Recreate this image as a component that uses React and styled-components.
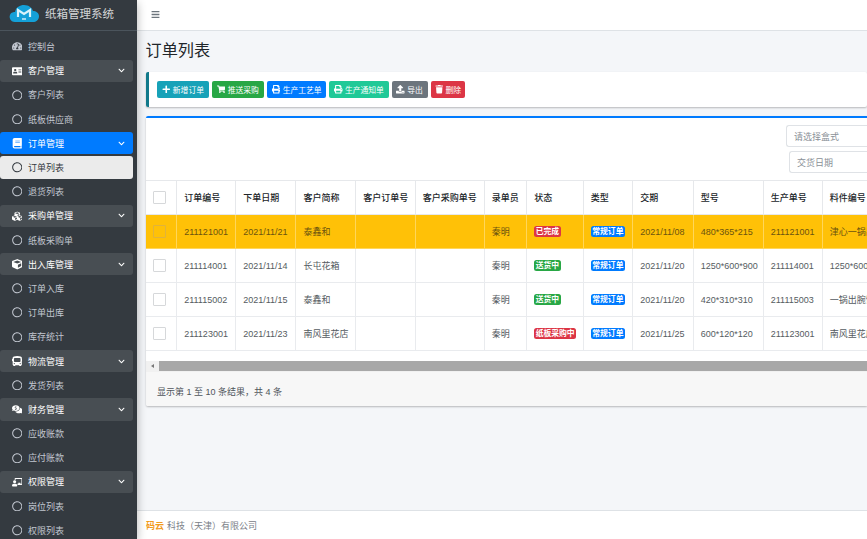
import React from 'react';
import styled, { createGlobalStyle } from 'styled-components';
import {
  FaTachometerAlt, FaAddressCard, FaBook, FaCubes, FaCube, FaBus, FaCommentsDollar, FaChalkboardTeacher,
  FaRegCircle, FaChevronDown, FaBars, FaPlus, FaShoppingCart, FaPrint, FaUpload, FaTrash,
} from 'react-icons/fa';

const Global = createGlobalStyle`
  html, body { margin: 0; padding: 0; width: 867px; height: 539px; overflow: hidden; }
  body { font-family: "Liberation Sans", "Noto Sans CJK SC", sans-serif; color: #212529; background: #f4f6f9; }
  * { box-sizing: border-box; }
`;

const Page = styled.div`display: flex; width: 867px; height: 539px; overflow: hidden;`;
const Sidebar = styled.aside`
  width: 137px; flex: none; background: #343a40; position: relative; z-index: 2;
  box-shadow: 0 3px 9px rgba(0,0,0,.3);
`;
const Brand = styled.div`
  height: 31px; display: flex; align-items: center; gap: 6px; padding: 0 0 4px 9px;
  border-bottom: 1px solid #4b545c; font-size: 11.5px; color: rgba(255,255,255,.8);
`;
const Nav = styled.nav`display: flex; flex-direction: column; gap: 2px; padding: 4.5px 4.5px 0 0;`;
const Item = styled.div`
  height: 22.2px; display: flex; align-items: center; padding-left: 10.5px; border-radius: 3px;
  font-size: 9px; flex: none;
  color: ${p => (p.$current ? '#343a40' : p.$open ? '#fff' : p.$group ? '#fff' : '#c2c7d0')};
  background: ${p => (p.$current ? '#ebebeb' : p.$open ? '#007bff' : p.$group ? 'rgba(255,255,255,.1)' : 'transparent')};
`;
const IconSlot = styled.span`width: 13px; margin-right: 4.5px; display: flex; justify-content: center; flex: none; font-size: 10.5px; align-items: center;`;
const Chevron = styled.span`margin-left: auto; margin-right: 8px; display: flex; font-size: 7px;`;

const Main = styled.div`flex: 1; min-width: 0; display: flex; flex-direction: column; overflow: hidden;`;
const Header = styled.header`
  height: 31px; flex: none; background: #fff; border-bottom: 1px solid #dee2e6; display: flex; align-items: center;
  padding: 0 0 2px 14px; color: #6c757d; font-size: 9px;
`;
const Content = styled.main`flex: 1; min-height: 0; padding-left: 9px; display: flex; flex-direction: column;`;
const Title = styled.h1`margin: 7px 0 0 -0.5px; font-size: 16.2px; line-height: 24px; height: 34px; font-weight: 400; color: #212529;`;
const Callout = styled.section`
  height: 35px; background: #fff; border-left: 3px solid #117a8b; border-radius: 2px; display: flex; align-items: center;
  gap: 3px; padding: 0 0 0 8.3px; box-shadow: 0 1px 2px rgba(0,0,0,.25);
`;
const Button = styled.span`
  height: 17px; width: ${p => p.$w}px; flex: none; border-radius: 2px; color: #fff; font-size: 7.8px; display: flex; align-items: center;
  justify-content: center; gap: 2.3px; background: ${p => p.$bg};
  svg { font-size: 8.5px; }
`;
const Card = styled.section`
  margin-top: 9px; height: 290px; background: #fff; border-top: 2px solid #007bff; border-radius: 2px 0 0 2px; overflow: hidden;
  box-shadow: 0 1px 2px rgba(0,0,0,.25); display: flex; flex-direction: column; flex: none;
`;
const Filters = styled.div`height: 62px; flex: none; display: flex; flex-direction: column; align-items: flex-start; gap: 4px; padding: 7px 0 0 640px;`;
const Field = styled.div`
  width: 120px; height: 22px; flex: none; margin-left: ${p => p.$shift}px; border: 1px solid #dfe2e6; border-right: 0; border-radius: 3px 0 0 3px; background: #fff;
  display: flex; align-items: center; padding-left: 7px; font-size: 9px; color: #8a9097;
`;
const Table = styled.table`border-collapse: collapse; table-layout: fixed; width: 756px; font-size: 9px; flex: none;`;
const Th = styled.th`
  height: 34px; padding: 0 0 0 7px; border: 1px solid #e6e8eb; font-weight: 500; text-align: left; color: #212529; white-space: nowrap; overflow: hidden;
  &:first-child { border-left: 0; }
`;
const Td = styled.td`
  height: 34px; padding: 0 0 0 7px; border: 1px solid ${p => (p.$hl ? '#ffd65a' : '#e9ebee')}; white-space: nowrap; overflow: hidden;
  color: ${p => (p.$hl ? '#6b5310' : '#555b61')}; background: ${p => (p.$hl ? '#ffc107' : 'transparent')};
  &:first-child { border-left: 0; }
`;
const Check = styled.span`display: block; width: 13px; height: 13px; border: 1px solid ${p => (p.$hl ? '#e0b33c' : '#d6d8da')}; border-radius: 1px;`;
const Badge = styled.span`
  display: inline-block; height: 11px; line-height: 11px; padding: 0 1.5px; border-radius: 2.5px; color: #fff; font-size: 7.8px; font-weight: 700; background: ${p => p.$bg};
`;
const ScrollTrack = styled.div`margin-top: 9.5px; height: 11px; flex: none; background: #f1f1f1; display: flex; align-items: center;`;
const Arrow = styled.span`width: 0; height: 0; margin-left: 5px; border: 2px solid transparent; border-right: 3px solid #777; border-left: 0;`;
const Thumb = styled.span`flex: 1; height: 10px; margin-left: 4.5px; background: #a8a8a8;`;
const CardFooter = styled.div`flex: 1; background: #f7f7f7; display: flex; align-items: center; padding: 5px 0 0 11px; font-size: 9px; color: #4f555b;`;
const Spacer = styled.div`flex: 1;`;
const Footer = styled.footer`
  height: 29px; flex: none; margin-left: -9px; background: #fff; border-top: 1px solid #dee2e6; display: flex; align-items: center; padding: 0 0 0 9px;
  font-size: 9px; color: #7a8087;
`;
const Strong = styled.b`color: #f29b1d; font-weight: 700; margin-right: 3px;`;

const Logo = () => (
  <svg width="30" height="20" viewBox="0 0 30 20" aria-hidden="true">
    <path d="M6 19 C1 19 0 14 1 12 C2 9 5 9 6 9 C7 4 11 2 15 2 C20 2 23 5 24 8 C27 8 30 10 30 13 C30 17 27 19 24 19 Z" fill="#14a0d8" />
    <path d="M9 14 V7 L15 11 L21 7 V14" fill="none" stroke="#d9f3fb" strokeWidth="2.2" />
    <path d="M13 16 H17" stroke="#d9f3fb" strokeWidth="1.4" />
  </svg>
);

const nav = [
  { t: '控制台', i: FaTachometerAlt },
  { t: '客户管理', i: FaAddressCard, g: true },
  { t: '客户列表' }, { t: '纸板供应商' },
  { t: '订单管理', i: FaBook, g: true, open: true },
  { t: '订单列表', cur: true }, { t: '退货列表' },
  { t: '采购单管理', i: FaCubes, g: true },
  { t: '纸板采购单' },
  { t: '出入库管理', i: FaCube, g: true },
  { t: '订单入库' }, { t: '订单出库' }, { t: '库存统计' },
  { t: '物流管理', i: FaBus, g: true },
  { t: '发货列表' },
  { t: '财务管理', i: FaCommentsDollar, g: true },
  { t: '应收账款' }, { t: '应付账款' },
  { t: '权限管理', i: FaChalkboardTeacher, g: true },
  { t: '岗位列表' }, { t: '权限列表' },
];

const buttons = [
  ['新增订单', FaPlus, '#17a2b8', 51.4], ['推送采购', FaShoppingCart, '#28a745', 52.4], ['生产工艺单', FaPrint, '#007bff', 59.3],
  ['生产通知单', FaPrint, '#20c997', 59.3], ['导出', FaUpload, '#6c757d', 36], ['删除', FaTrash, '#dc3545', 34.4],
];

const cols = [30.7, 59, 60.3, 59.7, 59.6, 69, 42.4, 56.6, 49.4, 60.6, 70, 59, 80];
const heads = ['订单编号', '下单日期', '客户简称', '客户订单号', '客户采购单号', '录单员', '状态', '类型', '交期', '型号', '生产单号', '料件编号'];
const rows = [
  { hl: true, c: ['211121001', '2021/11/21', '泰鑫和'], s: ['已完成', '#dc3545'], d: '2021/11/08', m: '480*365*215', n: '211121001', p: '津心一锅出' },
  { c: ['211114001', '2021/11/14', '长屯花箱'], s: ['送货中', '#28a745'], d: '2021/11/20', m: '1250*600*900', n: '211114001', p: '1250*600*9' },
  { c: ['211115002', '2021/11/15', '泰鑫和'], s: ['送货中', '#28a745'], d: '2021/11/20', m: '420*310*310', n: '211115003', p: '一锅出腕饼' },
  { c: ['211123001', '2021/11/23', '南风里花店'], s: ['纸板采购中', '#dc3545'], d: '2021/11/25', m: '600*120*120', n: '211123001', p: '南风里花店' },
];

export default function App() {
  return (
    <Page>
      <Global />
      <Sidebar>
        <Brand><Logo /><span>纸箱管理系统</span></Brand>
        <Nav>
          {nav.map(({ t, i: I, g, open, cur }) => (
            <Item key={t} $group={g} $open={open} $current={cur}>
              <IconSlot>{I ? <I /> : <FaRegCircle />}</IconSlot>
              {t}
              {g && <Chevron><FaChevronDown /></Chevron>}
            </Item>
          ))}
        </Nav>
      </Sidebar>
      <Main>
        <Header><FaBars /></Header>
        <Content>
          <Title>订单列表</Title>
          <Callout>
            {buttons.map(([t, I, bg, w]) => <Button key={t} $bg={bg} $w={w}><I />{t}</Button>)}
          </Callout>
          <Card>
            <Filters>
              <Field $shift={0}>请选择盒式</Field>
              <Field $shift={3}>交货日期</Field>
            </Filters>
            <Table>
              <colgroup>{cols.map((w, i) => <col key={i} style={{ width: w }} />)}</colgroup>
              <thead>
                <tr><Th><Check /></Th>{heads.map(h => <Th key={h}>{h}</Th>)}</tr>
              </thead>
              <tbody>
                {rows.map(r => (
                  <tr key={r.c[0]}>
                    <Td $hl={r.hl}><Check $hl={r.hl} /></Td>
                    {r.c.map(v => <Td key={v} $hl={r.hl}>{v}</Td>)}
                    <Td $hl={r.hl} /><Td $hl={r.hl} />
                    <Td $hl={r.hl}>秦明</Td>
                    <Td $hl={r.hl}><Badge $bg={r.s[1]}>{r.s[0]}</Badge></Td>
                    <Td $hl={r.hl}><Badge $bg="#007bff">常规订单</Badge></Td>
                    <Td $hl={r.hl}>{r.d}</Td>
                    <Td $hl={r.hl}>{r.m}</Td>
                    <Td $hl={r.hl}>{r.n}</Td>
                    <Td $hl={r.hl}>{r.p}</Td>
                  </tr>
                ))}
              </tbody>
            </Table>
            <ScrollTrack><Arrow /><Thumb /></ScrollTrack>
            <CardFooter>显示第 1 至 10 条结果，共 4 条</CardFooter>
          </Card>
          <Spacer />
          <Footer><Strong>码云</Strong>科技（天津）有限公司</Footer>
        </Content>
      </Main>
    </Page>
  );
}
